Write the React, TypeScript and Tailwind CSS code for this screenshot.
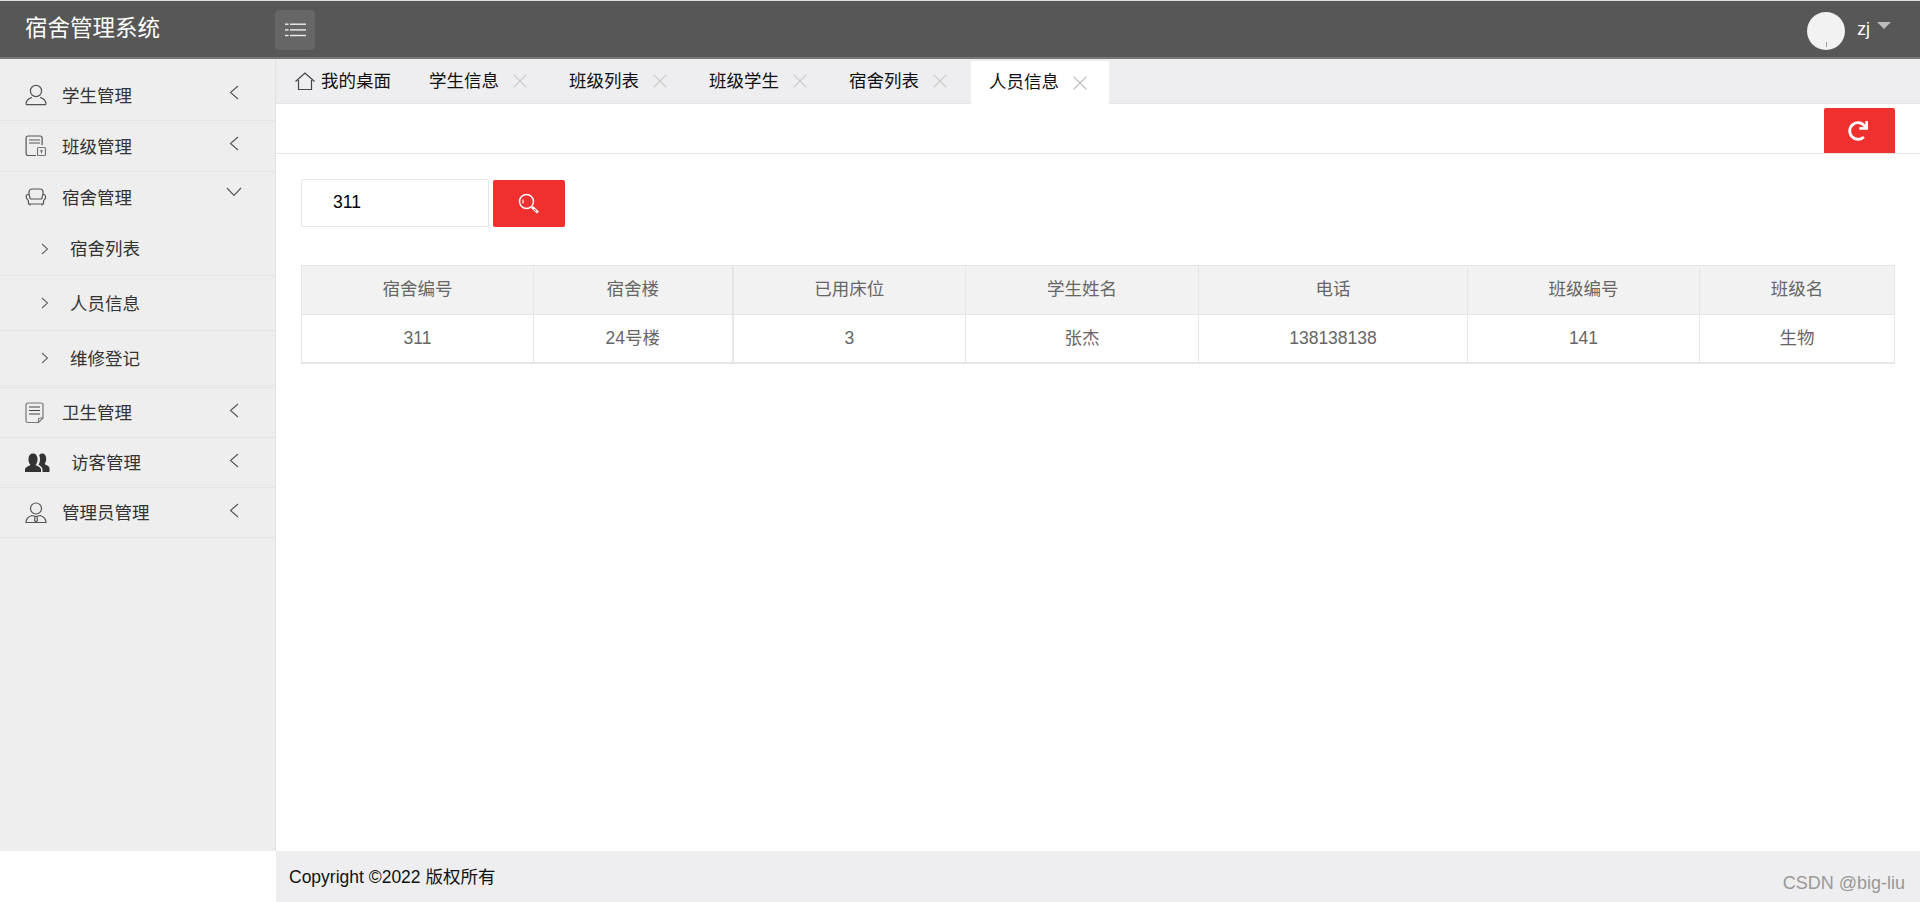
// src/App.tsx
import type { ReactNode } from "react";
import { X } from "lucide-react";
import { FaRedo } from "react-icons/fa";

// --- ICONS (the originals are an icon font, so they are drawn by hand) ---
const IconPerson = () => (
  <svg width="22" height="22" viewBox="0 0 22 22" fill="none" stroke="#555" strokeWidth="1.2">
    <circle cx="11" cy="7" r="5.6" />
    <path d="M1 20.5c0-4.5 3.500-6.500 6-7.200M21 20.5c0-4.500-3.500-6.500-6-7.200M1 20.6h20" />
  </svg>
);

const IconClassBook = () => (
  <svg width="22" height="22" viewBox="0 0 22 22" fill="none" stroke="#555" strokeWidth="1.2">
    <path d="M11 20.5H3a2 2 0 0 1-1.900-2V3a2 2 0 0 1 2-2h12a2 2 0 0 1 2 2v7" />
    <path d="M4 5h11M4 8h11" />
    <rect x="12.500" y="12.500" width="8" height="8" rx="1" stroke="#777" />
    <path d="M16.500 14.500v4M15 16h3" stroke="#777" strokeWidth="1" />
  </svg>
);

const IconSofa = () => (
  <svg width="22" height="22" viewBox="0 0 22 22" fill="none" stroke="#555" strokeWidth="1.2">
    <path d="M4 9V6a3 3 0 0 1 3-3h8a3 3 0 0 1 3 3v3" />
    <path d="M5 13h12M5 13c0-3-1-4.500-2.500-4.500S1 10.500 1.500 12c.5 1.500 2 2 2 3.500V18h15v-2.500c0-1.500 1.500-2 2-3.500s-.5-3.500-1.500-3.500S17 10 17 13" />
    <path d="M5 18v1.500M17 18v1.500" />
  </svg>
);

const IconNote = () => (
  <svg width="20" height="22" viewBox="0 0 20 22" fill="none" stroke="#777" strokeWidth="1.2">
    <path d="M13.500 20.500H3a2 2 0 0 1-2-2V3a2 2 0 0 1 2-2h13a2 2 0 0 1 2 2v13z" />
    <path d="M4 5h11M4 8.500h11M4 12h11" stroke="#444" />
    <path d="M13.500 20.500V17.500a1.500 1.500 0 0 1 1.500-1.500h3" />
  </svg>
);

const IconPeople = () => (
  <svg width="27" height="20" viewBox="0 0 27 20" fill="#333">
    <path d="M0 19v-2.500c0-2 3-3 5.500-4.500C4 10.500 3.500 8.500 3.500 6 3.500 2.500 5.300.5 8 .5s4.500 2 4.500 5.500c0 2.500-.5 4.500-2 6 2.500 1.500 5.500 2.500 5.500 4.500V19z" />
    <path d="M17.500 19v-2.500c0-2-1.500-3.200-4-4.700 1-1.500 1.500-3.500 1.500-5.800 0-1.500-.3-2.800-.8-3.800.6-1 1.700-1.600 3-1.600 2.500 0 4 2 4 5 0 2.300-.4 4-1.700 5.400 2.200 1.300 5 2.200 5 4.300V19z" />
  </svg>
);

const IconManager = () => (
  <svg width="22" height="22" viewBox="0 0 22 22" fill="none" stroke="#555" strokeWidth="1.2">
    <circle cx="11" cy="6.500" r="5.500" />
    <path d="M1 20.500c0-4 2.500-6 6-7l4 1 4-1c3.500 1 6 3 6 7zM1 20.500h20" />
    <path d="M10 14.500h2l.5 4-1.500 1.500-1.500-1.500z" />
  </svg>
);

const IconHouse = () => (
  <svg width="20" height="19" viewBox="0 0 20 19" fill="none" stroke="#444" strokeWidth="1.2">
    <path d="M.5 9.500 10 1l9.500 8.500" />
    <path d="M3.500 8v9.500h13V8" />
  </svg>
);

const IconBars = () => (
  <svg width="21" height="14" viewBox="0 0 21 14" fill="#eee">
    <rect x="0" y="0.500" width="3.500" height="1.400" />
    <rect x="5" y="0.500" width="16" height="1.400" />
    <rect x="0" y="6.200" width="3.500" height="1.400" />
    <rect x="5" y="6.200" width="16" height="1.400" />
    <rect x="0" y="11.800" width="3.500" height="1.400" />
    <rect x="5" y="11.800" width="16" height="1.400" />
  </svg>
);

const IconSearch = () => (
  <svg width="22" height="22" viewBox="0 0 22 22" fill="none" stroke="#fff">
    <circle cx="8.500" cy="8.500" r="7" strokeWidth="1.500" />
    <path d="M5 6.500v4" strokeWidth="1.200" />
    <path d="m14 14 6 5.500" strokeWidth="3" />
    <path d="m16 16 2.500 2.200" strokeWidth="1" stroke="#f02f2f" />
  </svg>
);

const ArrowLeft = () => (
  <svg width="10" height="15" viewBox="0 0 10 15" fill="none" stroke="#555" strokeWidth="1.1">
    <path d="M9 1 1.500 7.500 9 14" />
  </svg>
);

const ArrowDown = () => (
  <svg width="16" height="10" viewBox="0 0 16 10" fill="none" stroke="#555" strokeWidth="1.1">
    <path d="M1 1l7 7.500L15 1" />
  </svg>
);

const ArrowRight = () => (
  <svg width="8" height="12" viewBox="0 0 8 12" fill="none" stroke="#666" strokeWidth="1.1">
    <path d="M1 1l5.500 5L1 11" />
  </svg>
);

type MenuItem = {
  label: string;
  icon: ReactNode;
  height: string;
  textClass?: string;
  open?: boolean;
  noBorder?: boolean;
};

const MENU_TOP: MenuItem[] = [
  { label: "学生管理", icon: <IconPerson />, height: "h-[51px]" },
  { label: "班级管理", icon: <IconClassBook />, height: "h-[51px]" },
  { label: "宿舍管理", icon: <IconSofa />, height: "h-[50px]", open: true, noBorder: true },
];

const SUB_MENU = [
  { label: "宿舍列表", height: "h-[54px]" },
  { label: "人员信息", height: "h-[55px]" },
  { label: "维修登记", height: "h-[55px]" },
];

const MENU_BOTTOM: MenuItem[] = [
  { label: "卫生管理", icon: <IconNote />, height: "h-[50px]" },
  { label: "访客管理", icon: <IconPeople />, height: "h-[50px]", textClass: "ml-[8px]" },
  { label: "管理员管理", icon: <IconManager />, height: "h-[50px]" },
];

const TABS = ["学生信息", "班级列表", "班级学生", "宿舍列表"];

function MenuRow({ item }: { item: MenuItem }) {
  return (
    <div
      className={`relative flex items-center pl-[25px] text-[17.5px] text-[#333] ${item.height} ${
        item.noBorder ? "" : "border-b border-[#e4e4e4]"
      }`}
    >
      <span className="flex w-[38px] items-center">{item.icon}</span>
      <span className={`-ml-px mt-[2px] ${item.textClass ?? ""}`}>{item.label}</span>
      {item.open ? (
        <span className="absolute left-[226px] top-[15px] flex">
          <ArrowDown />
        </span>
      ) : (
        <span className="absolute left-[229px] top-[15px] flex">
          <ArrowLeft />
        </span>
      )}
    </div>
  );
}

function App() {
  return (
    <div className="flex h-screen flex-col bg-white font-['Liberation_Sans','Noto_Sans_CJK_SC',sans-serif]">
      {/* --- TOP HEADER --- */}
      <header className="flex h-[59px] shrink-0 items-center justify-between border-t border-b-2 border-t-[#ddd] border-b-[#777] bg-[#575757] text-white">
        <div className="flex items-center">
          <div className="w-[275px] pl-[25px] text-[22.5px]">宿舍管理系统</div>
          <button className="mt-[2px] flex h-[40px] w-[40px] items-center justify-center rounded bg-[#666]">
            <IconBars />
          </button>
        </div>
        <div className="flex items-center pr-[29px]">
          <div className="mt-[3px] flex h-[38px] w-[38px] items-end justify-center rounded-full bg-[#f2f2f2]">
            <span className="mb-[3px] h-[5px] w-[1px] bg-[#999]" />
          </div>
          <span className="ml-[12px] text-[17.5px] font-medium">zj</span>
          <span className="mb-[8px] ml-[7px] border-x-[7px] border-t-[7px] border-x-transparent border-t-[#bbb]" />
        </div>
      </header>

      <div className="grid flex-1 grid-cols-[276px_1fr] grid-rows-[1fr_51px]">
        {/* --- SIDEBAR --- */}
        <aside className="border-r border-[#e2e2e2] bg-[#eee] pt-[11px]">
          {MENU_TOP.map((item) => (
            <MenuRow key={item.label} item={item} />
          ))}
          {SUB_MENU.map((sub) => (
            <div
              key={sub.label}
              className={`flex items-center border-b border-[#e4e4e4] pl-[41px] text-[17.5px] text-[#333] ${sub.height}`}
            >
              <ArrowRight />
              <span className="ml-[21px] mt-[2px]">{sub.label}</span>
            </div>
          ))}
          <div className="mt-[1px] border-t border-[#e4e4e4]">
            {MENU_BOTTOM.map((item) => (
              <MenuRow key={item.label} item={item} />
            ))}
          </div>
        </aside>

        {/* --- MAIN CONTENT --- */}
        <main className="flex min-w-0 flex-col">
          <nav className="flex h-[45px] items-end border-b border-[#e4e4e4] bg-[#eeeef0] text-[17.5px] text-[#111]">
            <div className="flex h-full items-center pl-[19px] pr-[38px]">
              <IconHouse />
              <span className="ml-[6px]">我的桌面</span>
            </div>
            {TABS.map((tab) => (
              <div key={tab} className="flex h-full w-[140px] items-center">
                <span>{tab}</span>
                <X size={24} strokeWidth={1.1} className="ml-[9px] text-[#ccc]" />
              </div>
            ))}
            <div className="-mb-px -ml-[18px] flex h-[43px] w-[138px] items-center bg-white pl-[18px]">
              <span>人员信息</span>
              <X size={24} strokeWidth={1.1} className="ml-[9px] text-[#bbb]" />
            </div>
          </nav>

          <div className="flex h-[50px] justify-end border-b border-[#e4e4e4] pr-[25px] pt-[4px]">
            <button className="flex w-[71px] items-center justify-center rounded-t-[2px] bg-[#f02f2f] pr-[3px] text-white">
              <FaRedo size={20} />
            </button>
          </div>

          <div className="px-[25px] pt-[25px]">
            <div className="flex items-center gap-[4px]">
              <input
                readOnly
                value="311"
                className="h-[48px] w-[188px] rounded-[2px] border border-[#e6e6e6] pb-[2px] pl-[31px] text-[17.5px] text-black outline-none"
              />
              <button className="mt-[1px] flex h-[47px] w-[72px] items-center justify-center rounded-[2px] bg-[#f02f2f]">
                <IconSearch />
              </button>
            </div>

            <table className="mt-[38px] w-[1593px] table-fixed border-collapse border border-b-2 border-[#e6e6e6] text-center text-[17.5px] text-[#666]">
              <colgroup>
                <col className="w-[232px]" />
                <col className="w-[199px]" />
                <col className="w-[233px]" />
                <col className="w-[233px]" />
                <col className="w-[269px]" />
                <col className="w-[232px]" />
                <col className="w-[195px]" />
              </colgroup>
              <thead>
                <tr className="h-[49px] bg-[#f2f2f2]">
                  <th className="border border-[#e6e6e6] pb-[2px] font-normal">宿舍编号</th>
                  <th className="border border-r-2 border-[#e6e6e6] pb-[2px] font-normal">宿舍楼</th>
                  <th className="border border-[#e6e6e6] pb-[2px] font-normal">已用床位</th>
                  <th className="border border-[#e6e6e6] pb-[2px] font-normal">学生姓名</th>
                  <th className="border border-[#e6e6e6] pb-[2px] font-normal">电话</th>
                  <th className="border border-[#e6e6e6] pb-[2px] font-normal">班级编号</th>
                  <th className="border border-[#e6e6e6] pb-[2px] font-normal">班级名</th>
                </tr>
              </thead>
              <tbody>
                <tr className="h-[48px]">
                  <td className="border border-[#e6e6e6]">311</td>
                  <td className="border border-r-2 border-[#e6e6e6]">24号楼</td>
                  <td className="border border-[#e6e6e6]">3</td>
                  <td className="border border-[#e6e6e6]">张杰</td>
                  <td className="border border-[#e6e6e6]">138138138</td>
                  <td className="border border-[#e6e6e6]">141</td>
                  <td className="border border-[#e6e6e6]">生物</td>
                </tr>
              </tbody>
            </table>
          </div>
        </main>

        {/* --- FOOTER --- */}
        <div className="col-start-2 relative flex items-center bg-[#eeeef0] pl-[13px] pt-[2px] text-[17.5px] text-[#111]">
          Copyright ©2022 版权所有
          <span className="absolute right-[15px] top-[23px] text-[18px] leading-none text-[#999]">
            CSDN @big-liu
          </span>
        </div>
      </div>
    </div>
  );
}

export default App;
